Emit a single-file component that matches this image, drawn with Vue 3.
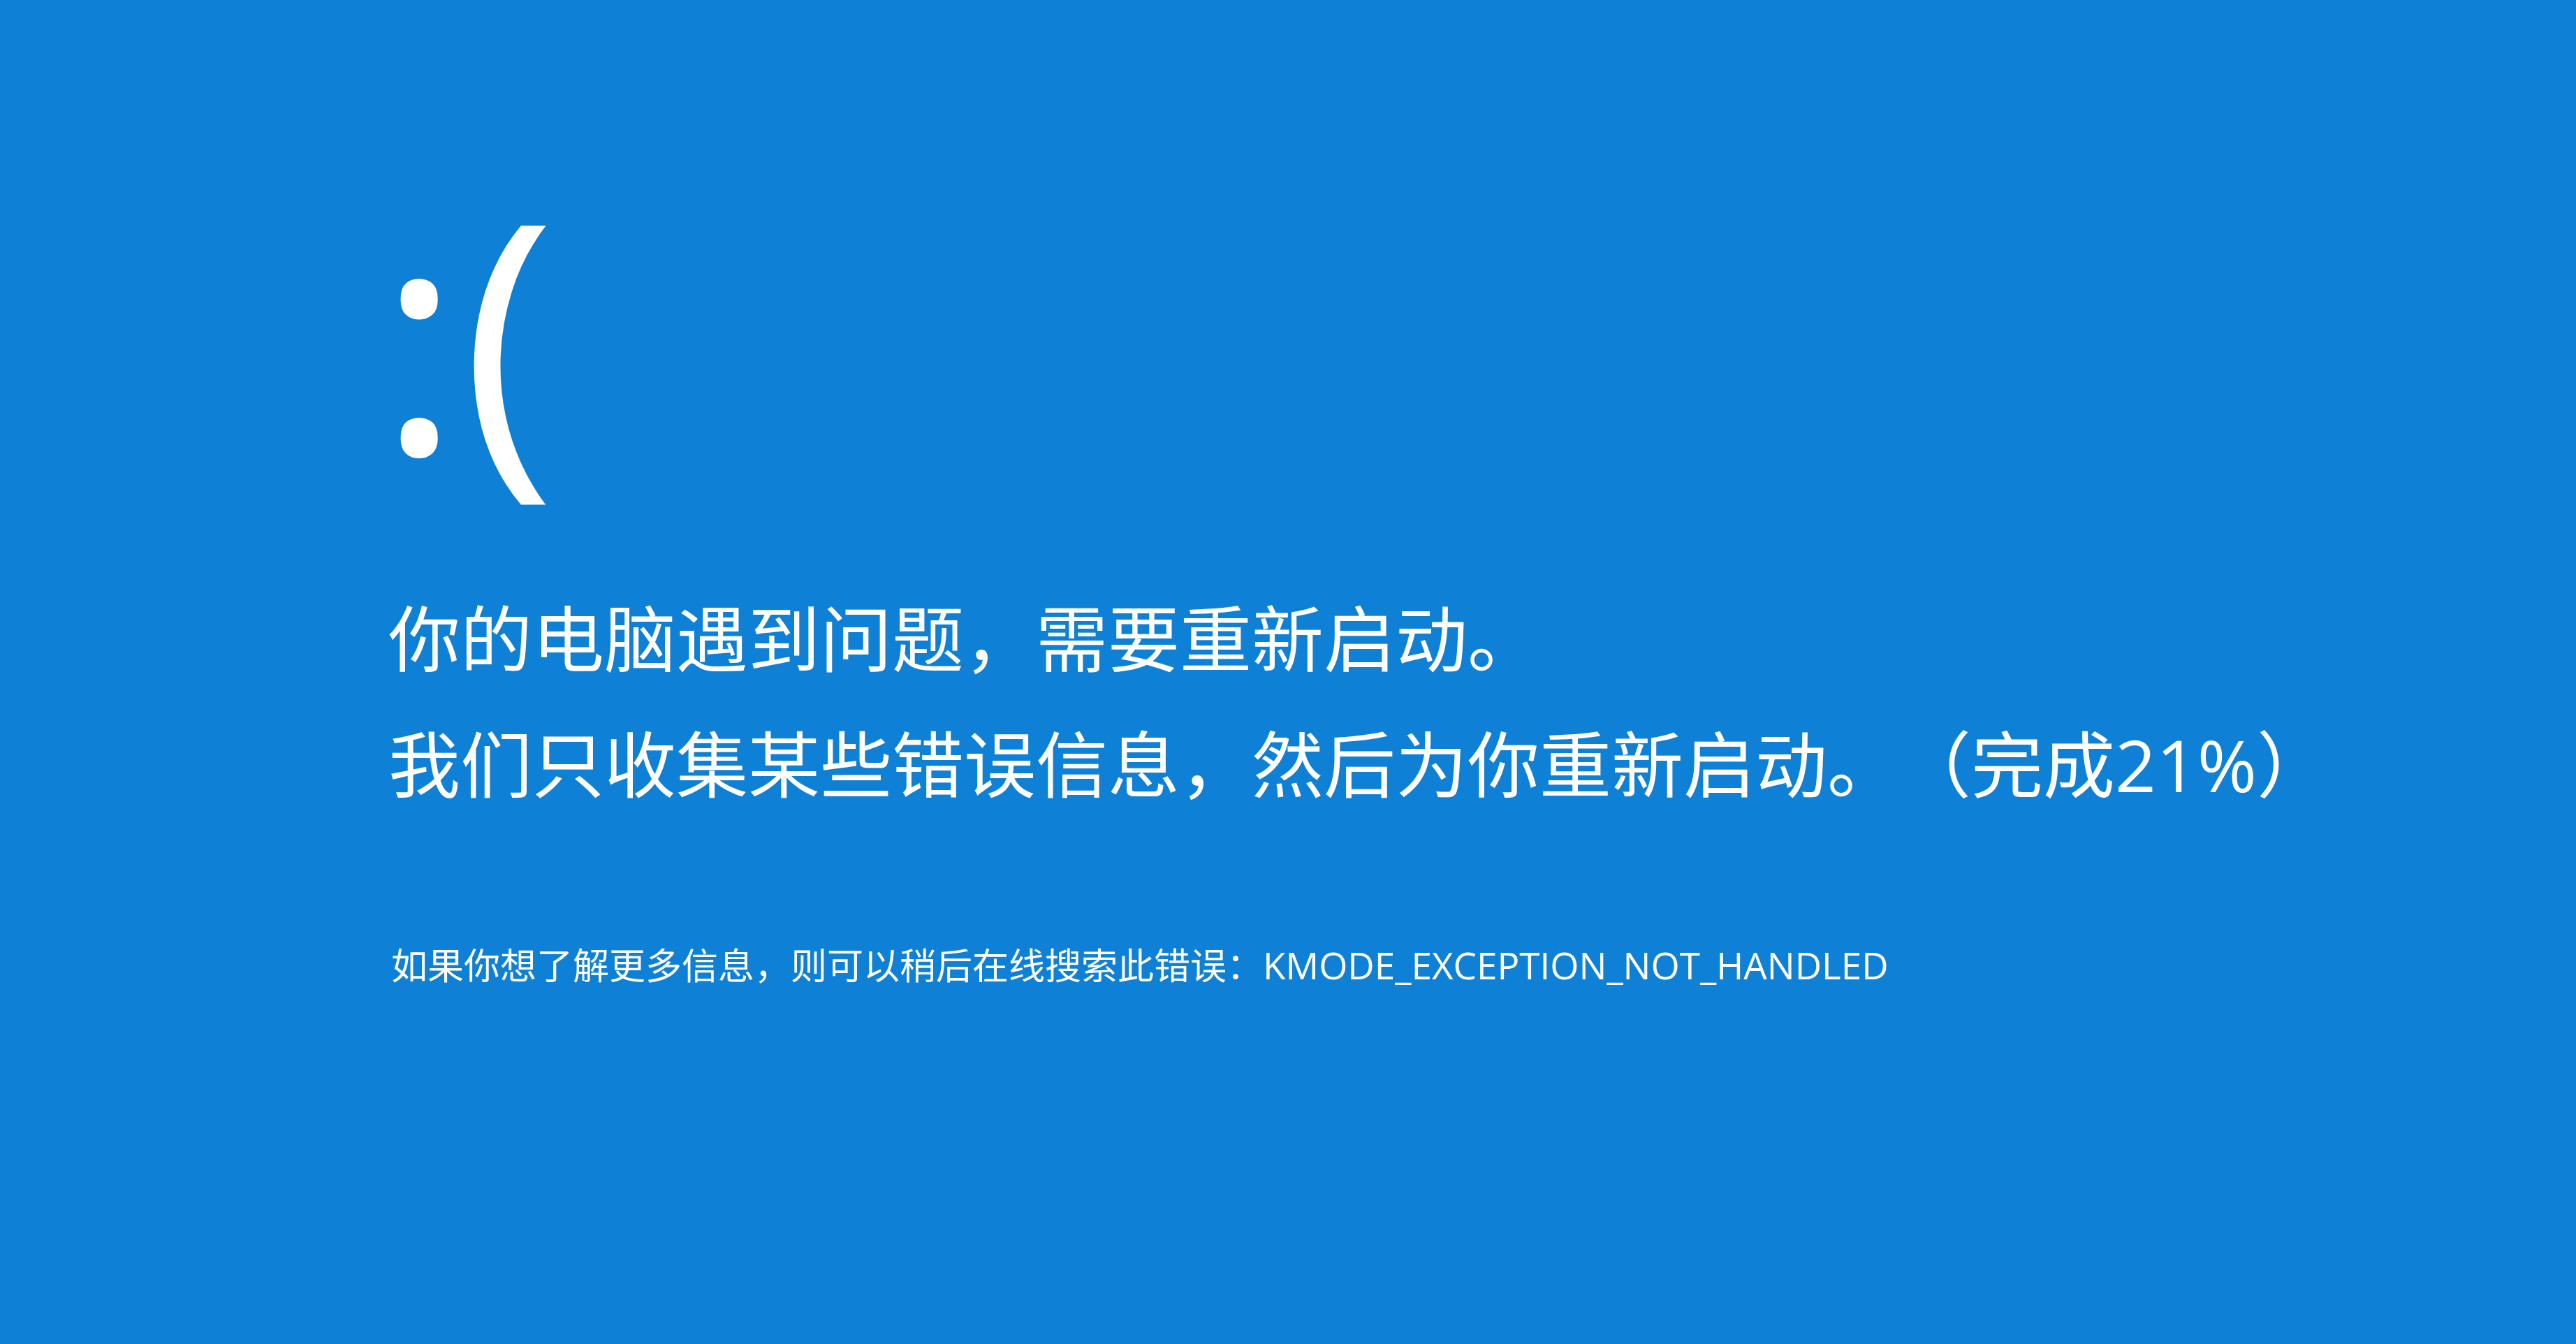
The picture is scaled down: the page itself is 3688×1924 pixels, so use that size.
<script setup>
const progress = 21
const stopCode = 'KMODE_EXCEPTION_NOT_HANDLED'
</script>

<template>
  <main class="screen" lang="zh-CN">
    <h1 class="face">:(</h1>
    <section class="body">
      <p class="message">你的电脑遇到问题，需要重新启动。</p>
      <p class="message">我们只收集某些错误信息，然后为你重新启动。（完成{{ progress }}%）</p>
      <p class="details">如果你想了解更多信息，则可以稍后在线搜索此错误：<span class="code">{{ stopCode }}</span></p>
    </section>
  </main>
</template>

<style>
body {
  margin: 0;
  background: #0e80d6;
}
</style>

<style scoped>
.screen {
  box-sizing: border-box;
  min-height: 100vh;
  padding: 192px 0 0 540px;
  color: #fff;
  background: #0e80d6;
  font-family: "Open Sans", "Noto Sans CJK SC", sans-serif;
  text-spacing-trim: space-all;
}

.face {
  margin: 0;
  font-size: 458px;
  font-weight: 400;
  line-height: 560px;
}

.body {
  padding: 72px 0 0 16px;
}

.message {
  margin: 0;
  font-size: 103px;
  line-height: 180px;
}

.details {
  margin: 158px 0 0 4px;
  font-size: 52px;
  line-height: 80px;
}

.code {
  font-size: 53px;
}
</style>
